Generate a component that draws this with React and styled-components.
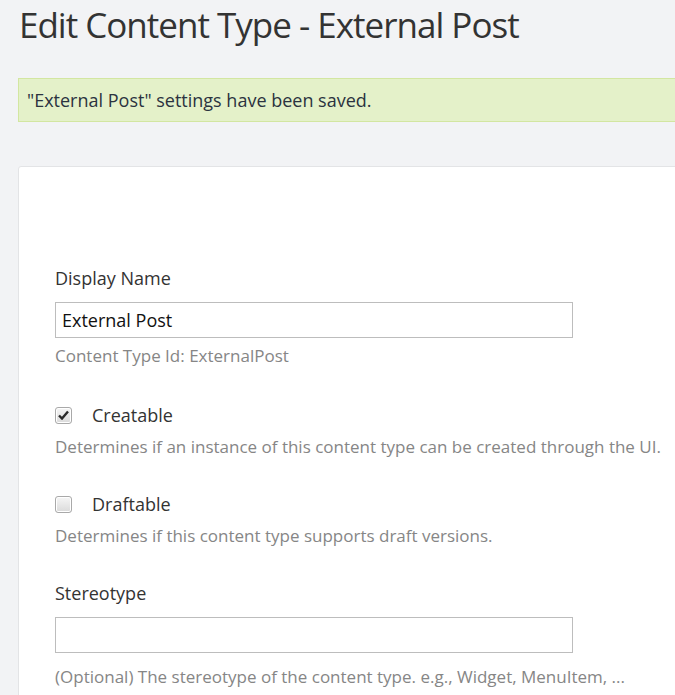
import styled, { createGlobalStyle } from "styled-components";

const GlobalStyle = createGlobalStyle`
  html, body {
    margin: 0;
    padding: 0;
    background: #f2f3f5;
    overflow: hidden;
  }
  body {
    font-family: "Open Sans", "Noto Sans", sans-serif;
    color: #333;
  }
`;

const Page = styled.div`
  width: 760px;
  padding-left: 18px;
`;

const Title = styled.h1`
  margin: 0 0 28px 1px;
  font-size: 35px;
  letter-spacing: -1px;
  font-weight: 400;
  line-height: 50px;
  color: #333;
`;

const Alert = styled.div`
  border: 1px solid #d3e6a1;
  background: #e4f1c9;
  padding: 9px 8px;
  font-size: 18px;
  line-height: 24px;
  color: #2b3340;
  margin-bottom: 44px;
`;

const Card = styled.div`
  background: #fff;
  border: 1px solid #e3e4e6;
  border-radius: 3px;
  padding: 99px 36px 40px;
`;

const Field = styled.div`
  margin-bottom: ${(p) => p.$gap || 0}px;
`;

const Label = styled.div`
  font-size: 18px;
  line-height: 24px;
  color: #333;
  margin-bottom: 12px;
`;

const TextBox = styled.div`
  box-sizing: border-box;
  width: 518px;
  height: 36px;
  border: 1px solid #bdbdbd;
  padding: 0 6px;
  font-size: 18px;
  line-height: 34px;
  color: #111;
`;

const Hint = styled.div`
  font-size: 17px;
  line-height: 22px;
  color: #868686;
  margin-top: ${(p) => p.$top || 0}px;
`;

const CheckRow = styled.div`
  display: flex;
  align-items: center;
  height: 24px;
`;

const Box = styled.span`
  box-sizing: border-box;
  width: 17px;
  height: 17px;
  border: 1px solid #a9a9a9;
  border-radius: 3px;
  background: linear-gradient(#f6f6f6, #dadada);
  box-shadow: inset 0 0 0 1px #fff;
  display: flex;
  align-items: center;
  justify-content: center;
  margin-right: 20px;
`;

const CheckLabel = styled.span`
  font-size: 18px;
  line-height: 24px;
  color: #333;
`;

const Checkbox = ({ checked }) => (
  <Box>
    {checked && (
      <svg width="11" height="10" viewBox="0 0 11 10">
        <path d="M1 5.5 L4 8.5 L10 1.5" fill="none" stroke="#2a2a2a" strokeWidth="2.4" />
      </svg>
    )}
  </Box>
);

export default function App() {
  return (
    <>
      <GlobalStyle />
      <Page>
        <Title>Edit Content Type - External Post</Title>
        <Alert>"External Post" settings have been saved.</Alert>
        <Card>
          <Field $gap={36}>
            <Label>Display Name</Label>
            <TextBox>External Post</TextBox>
            <Hint $top={7}>Content Type Id: ExternalPost</Hint>
          </Field>
          <Field $gap={34}>
            <CheckRow>
              <Checkbox checked />
              <CheckLabel>Creatable</CheckLabel>
            </CheckRow>
            <Hint $top={9}>Determines if an instance of this content type can be created through the UI.</Hint>
          </Field>
          <Field $gap={34}>
            <CheckRow>
              <Checkbox />
              <CheckLabel>Draftable</CheckLabel>
            </CheckRow>
            <Hint $top={9}>Determines if this content type supports draft versions.</Hint>
          </Field>
          <Field>
            <Label>Stereotype</Label>
            <TextBox />
            <Hint $top={13}>(Optional) The stereotype of the content type. e.g., Widget, MenuItem, ...</Hint>
          </Field>
        </Card>
      </Page>
    </>
  );
}
